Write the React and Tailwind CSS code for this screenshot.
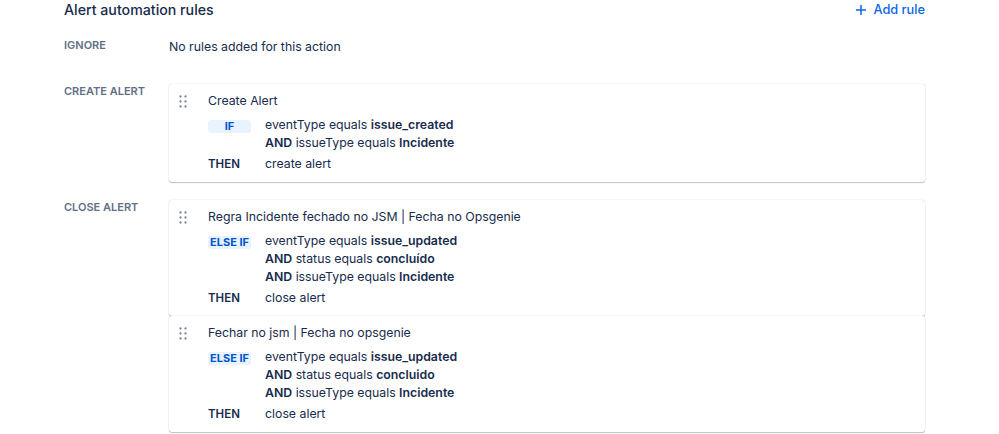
import React from 'react'

const rules = {
  create: [
    {
      name: 'Create Alert',
      badge: 'IF',
      conditions: [
        { pre: '', field: 'eventType equals ', value: 'issue_created' },
        { pre: 'AND', field: ' issueType equals ', value: 'Incidente' },
      ],
      then: 'create alert',
    },
  ],
  close: [
    {
      name: 'Regra Incidente fechado no JSM | Fecha no Opsgenie',
      badge: 'ELSE IF',
      conditions: [
        { pre: '', field: 'eventType equals ', value: 'issue_updated' },
        { pre: 'AND', field: ' status equals ', value: 'concluído' },
        { pre: 'AND', field: ' issueType equals ', value: 'Incidente' },
      ],
      then: 'close alert',
    },
    {
      name: 'Fechar no jsm | Fecha no opsgenie',
      badge: 'ELSE IF',
      conditions: [
        { pre: '', field: 'eventType equals ', value: 'issue_updated' },
        { pre: 'AND', field: ' status equals ', value: 'concluido' },
        { pre: 'AND', field: ' issueType equals ', value: 'Incidente' },
      ],
      then: 'close alert',
    },
  ],
}

function DragHandle() {
  return (
    <svg width="8" height="13" viewBox="0 0 8 13" className="text-[#7a8599]" fill="currentColor">
      <circle cx="1.5" cy="1.5" r="1.15" />
      <circle cx="6.5" cy="1.5" r="1.15" />
      <circle cx="1.5" cy="6.5" r="1.15" />
      <circle cx="6.5" cy="6.5" r="1.15" />
      <circle cx="1.5" cy="11.5" r="1.15" />
      <circle cx="6.5" cy="11.5" r="1.15" />
    </svg>
  )
}

function RuleCard({ rule }) {
  return (
    <div className="flex bg-white rounded-[3px] shadow-[0_1px_1px_rgba(9,30,66,0.25),0_0_1px_rgba(9,30,66,0.31)] pt-[7px] pb-[8px]">
      <div className="w-[39px] shrink-0 pl-[10px] pt-[4px]">
        <DragHandle />
      </div>
      <div className="flex flex-col">
        <div className="leading-[20px] h-[20px]">{rule.name}</div>
        <div className="flex mt-[5px]">
          <div className="w-[57px] shrink-0 pt-[1px]">
            <span className="inline-block min-w-[43px] text-center bg-[#e9f2ff] text-[#0055cc] font-bold text-[11px] leading-[13px] rounded-[3px] px-[2px] uppercase">
              {rule.badge}
            </span>
          </div>
          <div className="flex flex-col">
            {rule.conditions.map((c, i) => (
              <div key={i} className="leading-[18px] h-[18px]">
                {c.pre && <span className="font-semibold">{c.pre}</span>}
                {c.field}
                <span className="font-semibold">{c.value}</span>
              </div>
            ))}
          </div>
        </div>
        <div className="flex mt-[2px] leading-[20px]">
          <div className="w-[57px] shrink-0 text-[11.5px] font-semibold">THEN</div>
          <div>{rule.then}</div>
        </div>
      </div>
    </div>
  )
}

function Section({ label, children, className = '' }) {
  return (
    <div className={`flex ${className}`}>
      <div className="w-[105px] shrink-0 text-[11px] font-semibold text-[#626f86] uppercase leading-[16px] pt-[1px]">
        {label}
      </div>
      <div className="flex-1">{children}</div>
    </div>
  )
}

export default function App() {
  return (
    <div
      className="w-[999px] h-[434px] bg-white text-[#172b4d] text-[12.3px] overflow-hidden"
      style={{ fontFamily: 'Inter, "Noto Sans", sans-serif' }}
    >
      <div className="ml-[64px] w-[861px] pt-[1px]">
        <div className="flex items-center justify-between h-[18px]">
          <h2 className="text-[14.2px] font-medium leading-[18px]">Alert automation rules</h2>
          <button className="flex items-center gap-[6px] text-[#0c66e4] font-medium text-[12.8px] leading-[18px]">
            <svg width="12" height="12" viewBox="0 0 12 12" stroke="currentColor" strokeWidth="1.5" fill="none">
              <path d="M6 1v10M1 6h10" />
            </svg>
            Add rule
          </button>
        </div>

        <Section label="Ignore" className="mt-[17px]">
          <div className="leading-[20px] mt-[1px]">No rules added for this action</div>
        </Section>

        <Section label="Create alert" className="mt-[25px]">
          <div className="mt-[2px]">
            {rules.create.map((r, i) => (
              <RuleCard key={i} rule={r} />
            ))}
          </div>
        </Section>

        <Section label="Close alert" className="mt-[16px]">
          <div className="mt-[2px]">
            {rules.close.map((r, i) => (
              <RuleCard key={i} rule={r} />
            ))}
          </div>
        </Section>
      </div>
    </div>
  )
}
